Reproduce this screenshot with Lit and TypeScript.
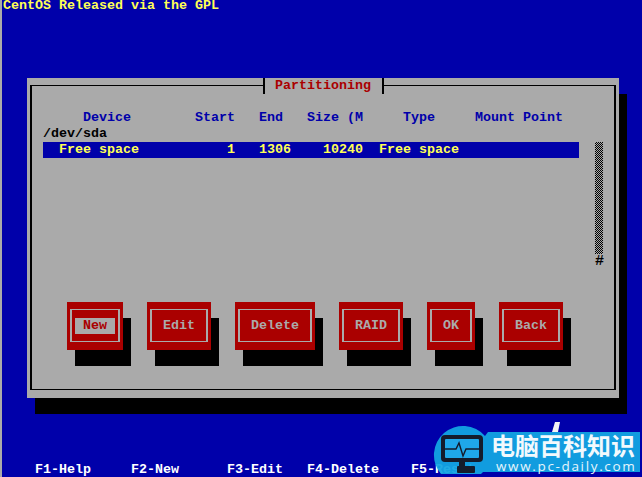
import { LitElement, html, css } from "lit";
import { customElement } from "lit/decorators.js";

const BUTTONS = ["New", "Edit", "Delete", "RAID", "OK", "Back"];

@customElement("app-root")
export class AppRoot extends LitElement {
  static styles = css`
    :host {
      display: block;
      position: relative;
      width: 642px;
      height: 477px;
      box-sizing: border-box;
      overflow: hidden;
      background: #0000aa;
      border-left: 2px solid #aaaaaa;
      font-family: "Liberation Mono", monospace;
      font-size: 13.333px;
      font-weight: bold;
      line-height: 16px;
    }
    .top, .row, .bottom { white-space: pre; }
    .top {
      height: 14px;
      padding-left: 1px;
      color: #ffff55;
      line-height: 12px;
    }
    .window {
      box-sizing: border-box;
      width: 592px;
      height: 320px;
      margin: 64px 0 64px 25px;
      padding: 7px 3px 8px;
      background: #aaaaaa;
      box-shadow: 8px 16px 0 #000;
    }
    .frame {
      box-sizing: border-box;
      height: 305px;
      border-style: solid;
      border-color: #000;
      border-width: 1px 2px;
      display: flex;
      flex-direction: column;
    }
    .title {
      align-self: flex-start;
      margin: -8px 0 0 231px;
      height: 16px;
      padding: 0 11px 0 10px;
      border-left: 2px solid #000;
      border-right: 2px solid #000;
      background: #aaaaaa;
      color: #aa0000;
    }
    .body {
      margin: 16px 0 0 11px;
      display: grid;
      grid-template-columns: 536px 8px;
      column-gap: 16px;
    }
    .rows { display: flex; flex-direction: column; }
    .row { height: 16px; }
    .head { color: #0000aa; }
    .drive { color: #000; }
    .selected { background: #0000aa; color: #ffff55; }
    .scroll {
      margin-top: 32px;
      display: flex;
      flex-direction: column;
    }
    .track {
      height: 112px;
      background: repeating-conic-gradient(#000 0 25%, #aaaaaa 0 50%) 0 0 / 2px 2px;
    }
    .end { height: 16px; color: #000; font-size: 15px; }
    .buttons {
      display: flex;
      gap: 24px;
      margin: 32px 0 0 35px;
    }
    .btn {
      box-sizing: border-box;
      height: 48px;
      padding: 7px 3px 8px;
      background: #aa0000;
      box-shadow: 8px 16px 0 #000;
      color: #aaaaaa;
    }
    .inner {
      box-sizing: border-box;
      height: 33px;
      border-style: solid;
      border-color: #aaaaaa;
      border-width: 1px 2px;
      padding: 8px 11px 0;
    }
    .focus .inner { padding: 8px 3px 0; }
    .inner span { display: block; }
    .focus span {
      padding: 0 8px;
      background: #aaaaaa;
      color: #aa0000;
    }
    .bottom {
      height: 16px;
      padding-left: 33px;
      color: #fff;
    }
    .logo {
      position: absolute;
      left: -2px;
      top: 0;
      width: 642px;
      height: 477px;
    }
    .shape { fill: #12a6e2; opacity: 0.94; }
    .sliver { fill: #f4f4f4; }
    .bezel { fill: #141c2c; }
    .screen { fill: #1fa8ea; }
    .pulse { fill: none; stroke: #141c2c; stroke-width: 1.4; }
    .cn {
      font-family: "Noto Sans CJK SC", sans-serif;
      font-size: 24px;
      font-weight: 700;
      fill: #f2f9fd;
    }
    .url {
      font-family: "Open Sans", sans-serif;
      font-size: 13.5px;
      font-weight: 400;
      letter-spacing: 1.65px;
      fill: #e6f5fc;
    }
  `;

  render() {
    return html`
      <div class="top">CentOS Released via the GPL</div>
      <div class="window">
        <div class="frame">
          <div class="title">Partitioning</div>
          <div class="body">
            <div class="rows">
              <div class="row head">     Device        Start   End   Size (M     Type     Mount Point</div>
              <div class="row drive">/dev/sda</div>
              <div class="row selected">  Free space           1   1306    10240  Free space</div>
            </div>
            <div class="scroll">
              <div class="track"></div>
              <div class="end">#</div>
            </div>
          </div>
          <div class="buttons">
            ${BUTTONS.map(
              (b, i) => html`<div class="btn ${i === 0 ? "focus" : ""}">
                <div class="inner"><span>${b}</span></div>
              </div>`
            )}
          </div>
        </div>
      </div>
      <div class="bottom">F1-Help     F2-New      F3-Edit   F4-Delete    F5-Reset</div>
      <svg class="logo" viewBox="0 0 642 477">
        <polygon class="sliver" points="555,422 560,422 558,432 552,432"></polygon>
        <path class="shape" d="M441 474 A29 29 0 1 1 485 436 L488 432 H640 V472 H483 L481 474 Z"></path>
        <rect class="bezel" x="441" y="435" width="42" height="27" rx="4"></rect>
        <rect class="screen" x="445" y="439" width="34" height="19" rx="1"></rect>
        <path class="pulse" d="M445 449 H456 L459 443 L463 456 L466 449 H479"></path>
        <rect class="bezel" x="459" y="462" width="6" height="5"></rect>
        <rect class="bezel" x="457" y="466" width="18" height="7" rx="1"></rect>
        <text class="cn" x="491" y="455">电脑百科知识</text>
        <text class="url" x="496" y="471">www.pc-daily.com</text>
      </svg>
    `;
  }
}
